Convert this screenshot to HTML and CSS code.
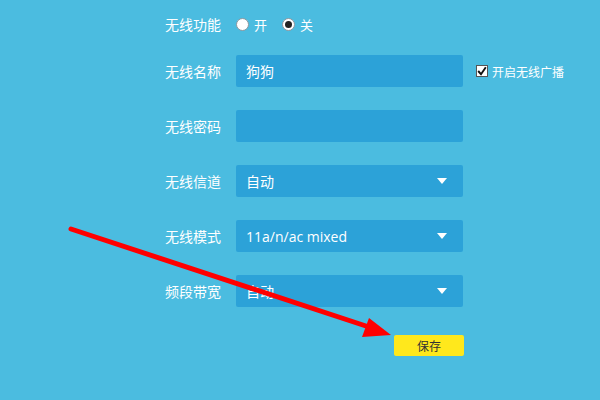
FILE: index.html
```html
<!DOCTYPE html>
<html lang="zh-CN">
<head>
    <meta charset="UTF-8">
    <meta name="viewport" content="width=device-width, initial-scale=1.0">
    <title>无线设置</title>
    <link rel="stylesheet" href="styles.css">
</head>
<body>
    <div class="form">
        <div class="row row-first">
            <span class="label">无线功能</span>
            <div class="radios">
                <span class="radio"></span><span class="radio-text">开</span>
                <span class="radio checked"></span><span class="radio-text">关</span>
            </div>
        </div>
        <div class="row">
            <span class="label">无线名称</span>
            <div class="field">狗狗</div>
            <div class="check">
                <span class="checkbox">
                    <svg width="10" height="10" viewBox="0 0 10 10"><path d="M1.2 5 L4 8.2 L8.8 1.2" fill="none" stroke="#111" stroke-width="1.9"/></svg>
                </span>
                <span class="check-text">开启无线广播</span>
            </div>
        </div>
        <div class="row">
            <span class="label">无线密码</span>
            <div class="field"></div>
        </div>
        <div class="row">
            <span class="label">无线信道</span>
            <div class="field select">自动<span class="caret"></span></div>
        </div>
        <div class="row">
            <span class="label">无线模式</span>
            <div class="field select latin">11a/n/ac mixed<span class="caret"></span></div>
        </div>
        <div class="row">
            <span class="label">频段带宽</span>
            <div class="field select">自动<span class="caret"></span></div>
        </div>
        <div class="actions">
            <button class="btn">保存</button>
        </div>
    </div>

    <svg class="arrow" width="600" height="400" viewBox="0 0 600 400">
        <line x1="71" y1="229" x2="372" y2="328" stroke="#f00" stroke-width="5" stroke-linecap="round"/>
        <polygon points="369,318 391,335 362,337" fill="#f00"/>
    </svg>
</body>
</html>
```

FILE: styles.css
```css
* {
    margin: 0;
    padding: 0;
    box-sizing: border-box;
}
body {
    width: 600px;
    height: 400px;
    overflow: hidden;
    background: #4bbce0;
    color: white;
    font-family: "Noto Sans CJK SC", "Noto Sans", sans-serif;
    font-size: 14px;
    position: relative;
}
.form {
    padding: 8px 0 0 165px;
}
.row {
    display: flex;
    align-items: center;
    height: 32px;
    margin-bottom: 23px;
}
.row-first {
    margin-bottom: 15px;
}
.label {
    width: 56px;
    margin-right: 15px;
    font-size: 14px;
    white-space: nowrap;
}
.radios {
    display: flex;
    align-items: center;
    font-size: 13px;
}
.radio {
    width: 13px;
    height: 13px;
    border-radius: 50%;
    background: white;
    border: 1px solid #8d979e;
    display: flex;
    align-items: center;
    justify-content: center;
}
.radio.checked::after {
    content: "";
    width: 7px;
    height: 7px;
    border-radius: 50%;
    background: #222;
}
.radio-text {
    margin: 0 15px 0 5px;
}
.field {
    width: 227px;
    height: 32px;
    background: #2ca2d8;
    border-radius: 2px;
    padding-left: 10px;
    display: flex;
    align-items: center;
    font-size: 14px;
}
.select {
    justify-content: space-between;
    padding-right: 16px;
}
.latin {
    font-family: "Open Sans", "Noto Sans", sans-serif;
}
.caret {
    width: 0;
    height: 0;
    border-left: 5px solid transparent;
    border-right: 5px solid transparent;
    border-top: 6px solid white;
}
.check {
    display: flex;
    align-items: center;
    margin-left: 13px;
    font-size: 12px;
}
.checkbox {
    width: 12px;
    height: 12px;
    background: white;
    border: 1px solid #555;
    display: flex;
    align-items: center;
    justify-content: center;
    margin-right: 4px;
}
.actions {
    display: flex;
    justify-content: flex-end;
    width: 299px;
    padding-top: 5px;
}
.btn {
    width: 70px;
    height: 21px;
    border: none;
    border-radius: 2px;
    background: #ffe81c;
    color: #333;
    font-family: "Noto Sans CJK SC", sans-serif;
    font-size: 12px;
}
.arrow {
    position: absolute;
    left: 0;
    top: 0;
}
```
